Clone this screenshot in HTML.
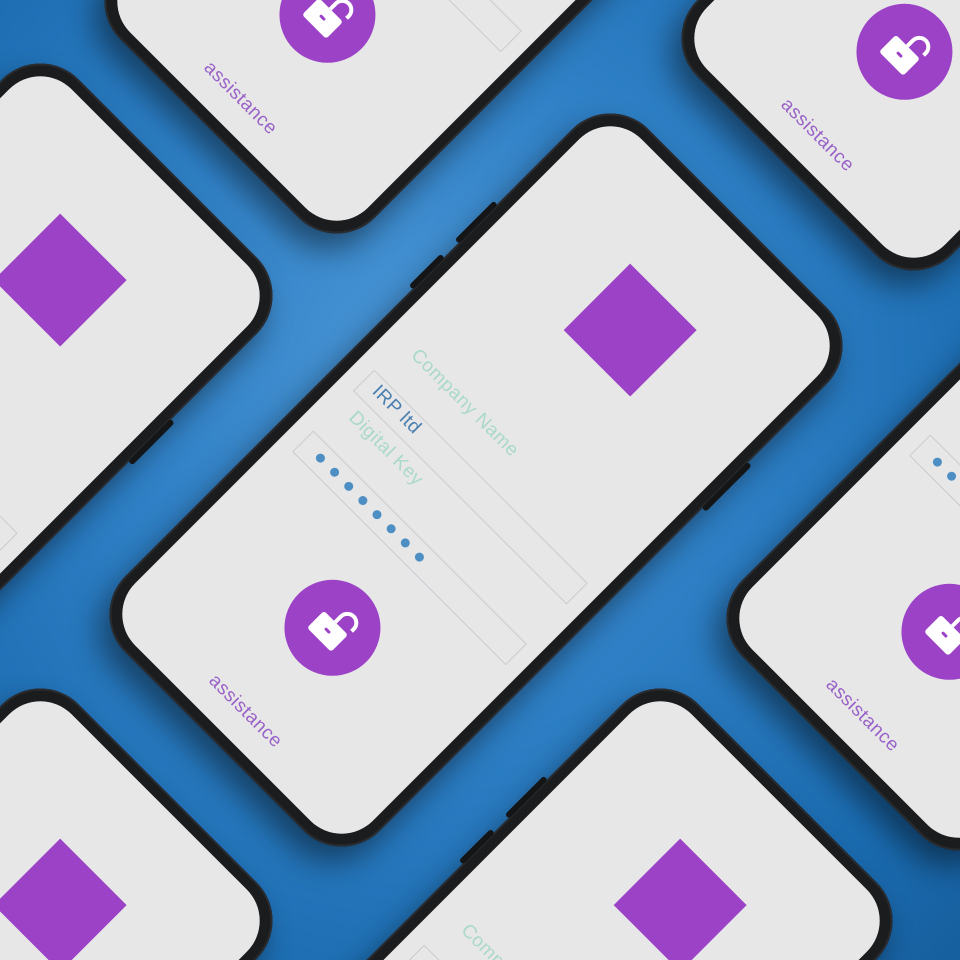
<!DOCTYPE html>
<html><head><meta charset="utf-8"><style>
html,body{margin:0;padding:0;width:960px;height:960px;overflow:hidden}
.wrap{position:relative;width:960px;height:960px;overflow:hidden;
background:radial-gradient(ellipse at 45% 40%,#4c97d6 0%,#2f80c6 40%,#1a6bb0 80%,#175f9e 100%);}
.ph{position:absolute;width:360px;height:740px;transform:rotate(45deg);border-radius:54px;background:#1b1c1e;
box-shadow:4px 18px 30px rgba(0,0,0,.45), inset 0 0 0 2px #2a2b2e;}
.scr{position:absolute;left:12px;top:12px;right:12px;bottom:12px;border-radius:44px;background:#e7e7e7;overflow:hidden}
.c{position:absolute;left:168px;top:358px;width:0;height:0}
.sq{position:absolute;left:-44px;top:-262px;width:94px;height:94px;background:#9b42c7}
.lock{position:absolute;left:-45px;top:158px;width:96px;height:96px;border-radius:50%;background:#9b42c7}
.lbl{position:absolute;font-family:"Liberation Sans",sans-serif;font-weight:300;font-size:19px;white-space:nowrap;letter-spacing:.5px}
.box{position:absolute;border:1px solid #c9cbd0;}
.dot{position:absolute;width:9px;height:9px;border-radius:50%;background:#4d8fc4}
.btn{position:absolute;background:#141516;border-radius:3px}
</style></head><body><div class="wrap">

<div class="ph" style="left:291px;top:-503px"><div class="btn" style="left:-5px;top:170px;width:6px;height:50px"></div><div class="btn" style="left:-5px;top:235px;width:6px;height:40px"></div><div class="btn" style="right:-5px;top:175px;width:6px;height:60px"></div><div class="scr"><div class="c">
<div class="sq"></div>
<div class="lbl" style="left:-134px;top:-57px;color:#aad9c9">Company Name</div>
<div class="box" style="left:-150px;top:-6px;width:300px;height:28px"></div>
<div class="lbl" style="left:-136px;top:-4px;color:#4a7fb0">IRP ltd</div>
<div class="lbl" style="left:-134px;top:31px;color:#aad9c9">Digital Key</div>
<div class="box" style="left:-150px;top:80px;width:300px;height:28px"></div>
<div class="dot" style="left:-130px;top:90px"></div><div class="dot" style="left:-110px;top:90px"></div><div class="dot" style="left:-90px;top:90px"></div><div class="dot" style="left:-70px;top:90px"></div><div class="dot" style="left:-50px;top:90px"></div><div class="dot" style="left:-30px;top:90px"></div><div class="dot" style="left:-10px;top:90px"></div><div class="dot" style="left:10px;top:90px"></div>
<div class="lock"><svg width="96" height="96" viewBox="0 0 96 96"><path d="M46 42v-8a9 9 0 0 1 18 0v3" fill="none" stroke="#fff" stroke-width="4"/><rect x="30" y="42" width="34" height="24" rx="3" fill="#fff"/><rect x="43" y="52" width="7" height="3" rx="1.5" fill="#9b42c7"/></svg></div>
<div class="lbl" style="left:-47px;top:316px;color:#9a63c8">assistance</div>
</div></div></div>

<div class="ph" style="left:868px;top:-466px"><div class="btn" style="left:-5px;top:170px;width:6px;height:50px"></div><div class="scr"><div class="c">
<div class="sq"></div>
<div class="lock"><svg width="96" height="96" viewBox="0 0 96 96"><path d="M46 42v-8a9 9 0 0 1 18 0v3" fill="none" stroke="#fff" stroke-width="4"/><rect x="30" y="42" width="34" height="24" rx="3" fill="#fff"/><rect x="43" y="52" width="7" height="3" rx="1.5" fill="#9b42c7"/></svg></div>
<div class="lbl" style="left:-47px;top:316px;color:#9a63c8">assistance</div>
</div></div></div>

<div class="ph" style="left:-274px;top:60px"><div class="btn" style="right:-5px;top:175px;width:6px;height:60px"></div><div class="scr"><div class="c">
<div class="sq"></div>
<div class="lbl" style="left:-134px;top:-57px;color:#aad9c9">Company Name</div>
<div class="box" style="left:-150px;top:-6px;width:300px;height:28px"></div>
<div class="box" style="left:-150px;top:80px;width:300px;height:28px"></div>
</div></div></div>

<div class="ph" style="left:296px;top:110px"><div class="btn" style="left:-5px;top:160px;width:6px;height:55px"></div><div class="btn" style="left:-5px;top:235px;width:6px;height:45px"></div><div class="btn" style="right:-5px;top:165px;width:6px;height:65px"></div><div class="scr"><div class="c">
<div class="sq"></div>
<div class="lbl" style="left:-134px;top:-57px;color:#aad9c9">Company Name</div>
<div class="box" style="left:-150px;top:-6px;width:300px;height:28px"></div>
<div class="lbl" style="left:-136px;top:-4px;color:#4a7fb0">IRP ltd</div>
<div class="lbl" style="left:-134px;top:31px;color:#aad9c9">Digital Key</div>
<div class="box" style="left:-150px;top:80px;width:300px;height:28px"></div>
<div class="dot" style="left:-130px;top:90px"></div><div class="dot" style="left:-110px;top:90px"></div><div class="dot" style="left:-90px;top:90px"></div><div class="dot" style="left:-70px;top:90px"></div><div class="dot" style="left:-50px;top:90px"></div><div class="dot" style="left:-30px;top:90px"></div><div class="dot" style="left:-10px;top:90px"></div><div class="dot" style="left:10px;top:90px"></div>
<div class="lock"><svg width="96" height="96" viewBox="0 0 96 96"><path d="M46 42v-8a9 9 0 0 1 18 0v3" fill="none" stroke="#fff" stroke-width="4"/><rect x="30" y="42" width="34" height="24" rx="3" fill="#fff"/><rect x="43" y="52" width="7" height="3" rx="1.5" fill="#9b42c7"/></svg></div>
<div class="lbl" style="left:-47px;top:316px;color:#9a63c8">assistance</div>
</div></div></div>

<div class="ph" style="left:913px;top:114px"><div class="scr"><div class="c">
<div class="sq"></div>
<div class="lbl" style="left:-134px;top:-57px;color:#aad9c9">Company Name</div>
<div class="box" style="left:-150px;top:-6px;width:300px;height:28px"></div>
<div class="lbl" style="left:-134px;top:31px;color:#aad9c9">Digital Key</div>
<div class="box" style="left:-150px;top:80px;width:300px;height:28px"></div>
<div class="dot" style="left:-130px;top:90px"></div><div class="dot" style="left:-110px;top:90px"></div><div class="dot" style="left:-90px;top:90px"></div><div class="dot" style="left:-70px;top:90px"></div><div class="dot" style="left:-50px;top:90px"></div><div class="dot" style="left:-30px;top:90px"></div><div class="dot" style="left:-10px;top:90px"></div><div class="dot" style="left:10px;top:90px"></div>
<div class="lock"><svg width="96" height="96" viewBox="0 0 96 96"><path d="M46 42v-8a9 9 0 0 1 18 0v3" fill="none" stroke="#fff" stroke-width="4"/><rect x="30" y="42" width="34" height="24" rx="3" fill="#fff"/><rect x="43" y="52" width="7" height="3" rx="1.5" fill="#9b42c7"/></svg></div>
<div class="lbl" style="left:-47px;top:316px;color:#9a63c8">assistance</div>
</div></div></div>

<div class="ph" style="left:-274px;top:685px"><div class="scr"><div class="c">
<div class="sq"></div>
</div></div></div>

<div class="ph" style="left:346px;top:685px"><div class="btn" style="left:-5px;top:160px;width:6px;height:55px"></div><div class="btn" style="left:-5px;top:235px;width:6px;height:45px"></div><div class="scr"><div class="c">
<div class="sq"></div>
<div class="lbl" style="left:-134px;top:-57px;color:#aad9c9">Company Name</div>
<div class="box" style="left:-150px;top:-6px;width:300px;height:28px"></div>
</div></div></div>

</div></body></html>
